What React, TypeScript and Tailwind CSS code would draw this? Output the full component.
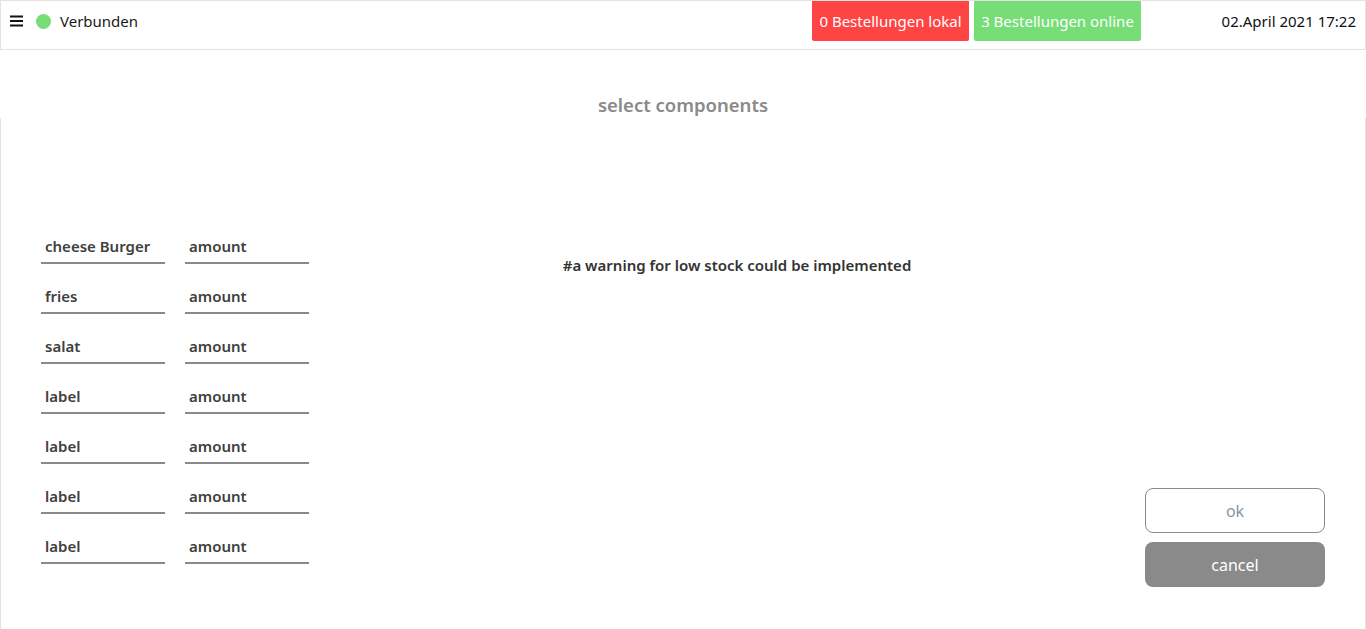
import React from "react";

const rows = ["cheese Burger", "fries", "salat", "label", "label", "label", "label"];

export default function App() {
  return (
    <div
      className="flex h-screen flex-col bg-white text-[#222]"
      style={{ fontFamily: '"Noto Sans", "Open Sans", sans-serif' }}
    >
      <header className="flex h-[50px] shrink-0 items-start border border-[#e3e3e3] pr-[9px]">
        <div className="flex h-[40px] items-center">
          <svg width="13" height="12" viewBox="0 0 13 12" className="ml-[9px]">
            <rect x="0" y="0.5" width="13" height="2" fill="#111" />
            <rect x="0" y="5" width="13" height="2" fill="#111" />
            <rect x="0" y="9.5" width="13" height="2" fill="#111" />
          </svg>
          <span className="ml-[13px] h-[15px] w-[15px] rounded-full bg-[#77dd77]" />
          <span className="ml-[9px] text-[15px] text-[#1a1a1a]">Verbunden</span>
        </div>
        <div className="ml-auto flex h-[40px] gap-[5px]">
          <div className="flex h-[40px] w-[157px] items-center justify-center rounded-b-[2px] bg-[#ff4444] text-[15px] text-white">
            0 Bestellungen lokal
          </div>
          <div className="flex h-[40px] w-[167px] items-center justify-center rounded-b-[2px] bg-[#77dd77] text-[15px] text-white">
            3 Bestellungen online
          </div>
        </div>
        <div className="flex h-[40px] w-[215px] items-center justify-end text-[15px] text-[#111]">
          02.April 2021 17:22
        </div>
      </header>

      <div className="flex h-[68px] shrink-0 items-center justify-center">
        <h1 className="mt-[42px] text-[18.5px] font-semibold text-[#8a8a8a]">select components</h1>
      </div>

      <main className="flex flex-1 gap-5 border-x border-[#e3e3e3] pl-[40px] pr-[40px] pt-[112px] pb-[42px]">
        <div className="flex flex-col gap-4">
          {rows.map((r, i) => (
            <div key={i} className="flex gap-5">
              <div className="flex h-[34px] w-[124px] items-center border-b-2 border-[#8a8a8a] pl-1 text-[15px] font-semibold text-[#404040]">
                {r}
              </div>
              <div className="flex h-[34px] w-[124px] items-center border-b-2 border-[#8a8a8a] pl-1 text-[15px] font-semibold text-[#404040]">
                amount
              </div>
            </div>
          ))}
        </div>
        <div className="flex-1 pl-[20px] pt-[24px] text-center text-[15px] font-semibold text-[#333]">
          #a warning for low stock could be implemented
        </div>
        <div className="flex w-[180px] flex-col justify-end gap-[9px]">
          <button className="h-[45px] w-full rounded-[8px] border border-[#8a8a8a] bg-white text-[16px] text-[#8795a1]">
            ok
          </button>
          <button className="h-[45px] w-full rounded-[8px] bg-[#8a8a8a] text-[16px] text-white">
            cancel
          </button>
        </div>
      </main>
    </div>
  );
}
